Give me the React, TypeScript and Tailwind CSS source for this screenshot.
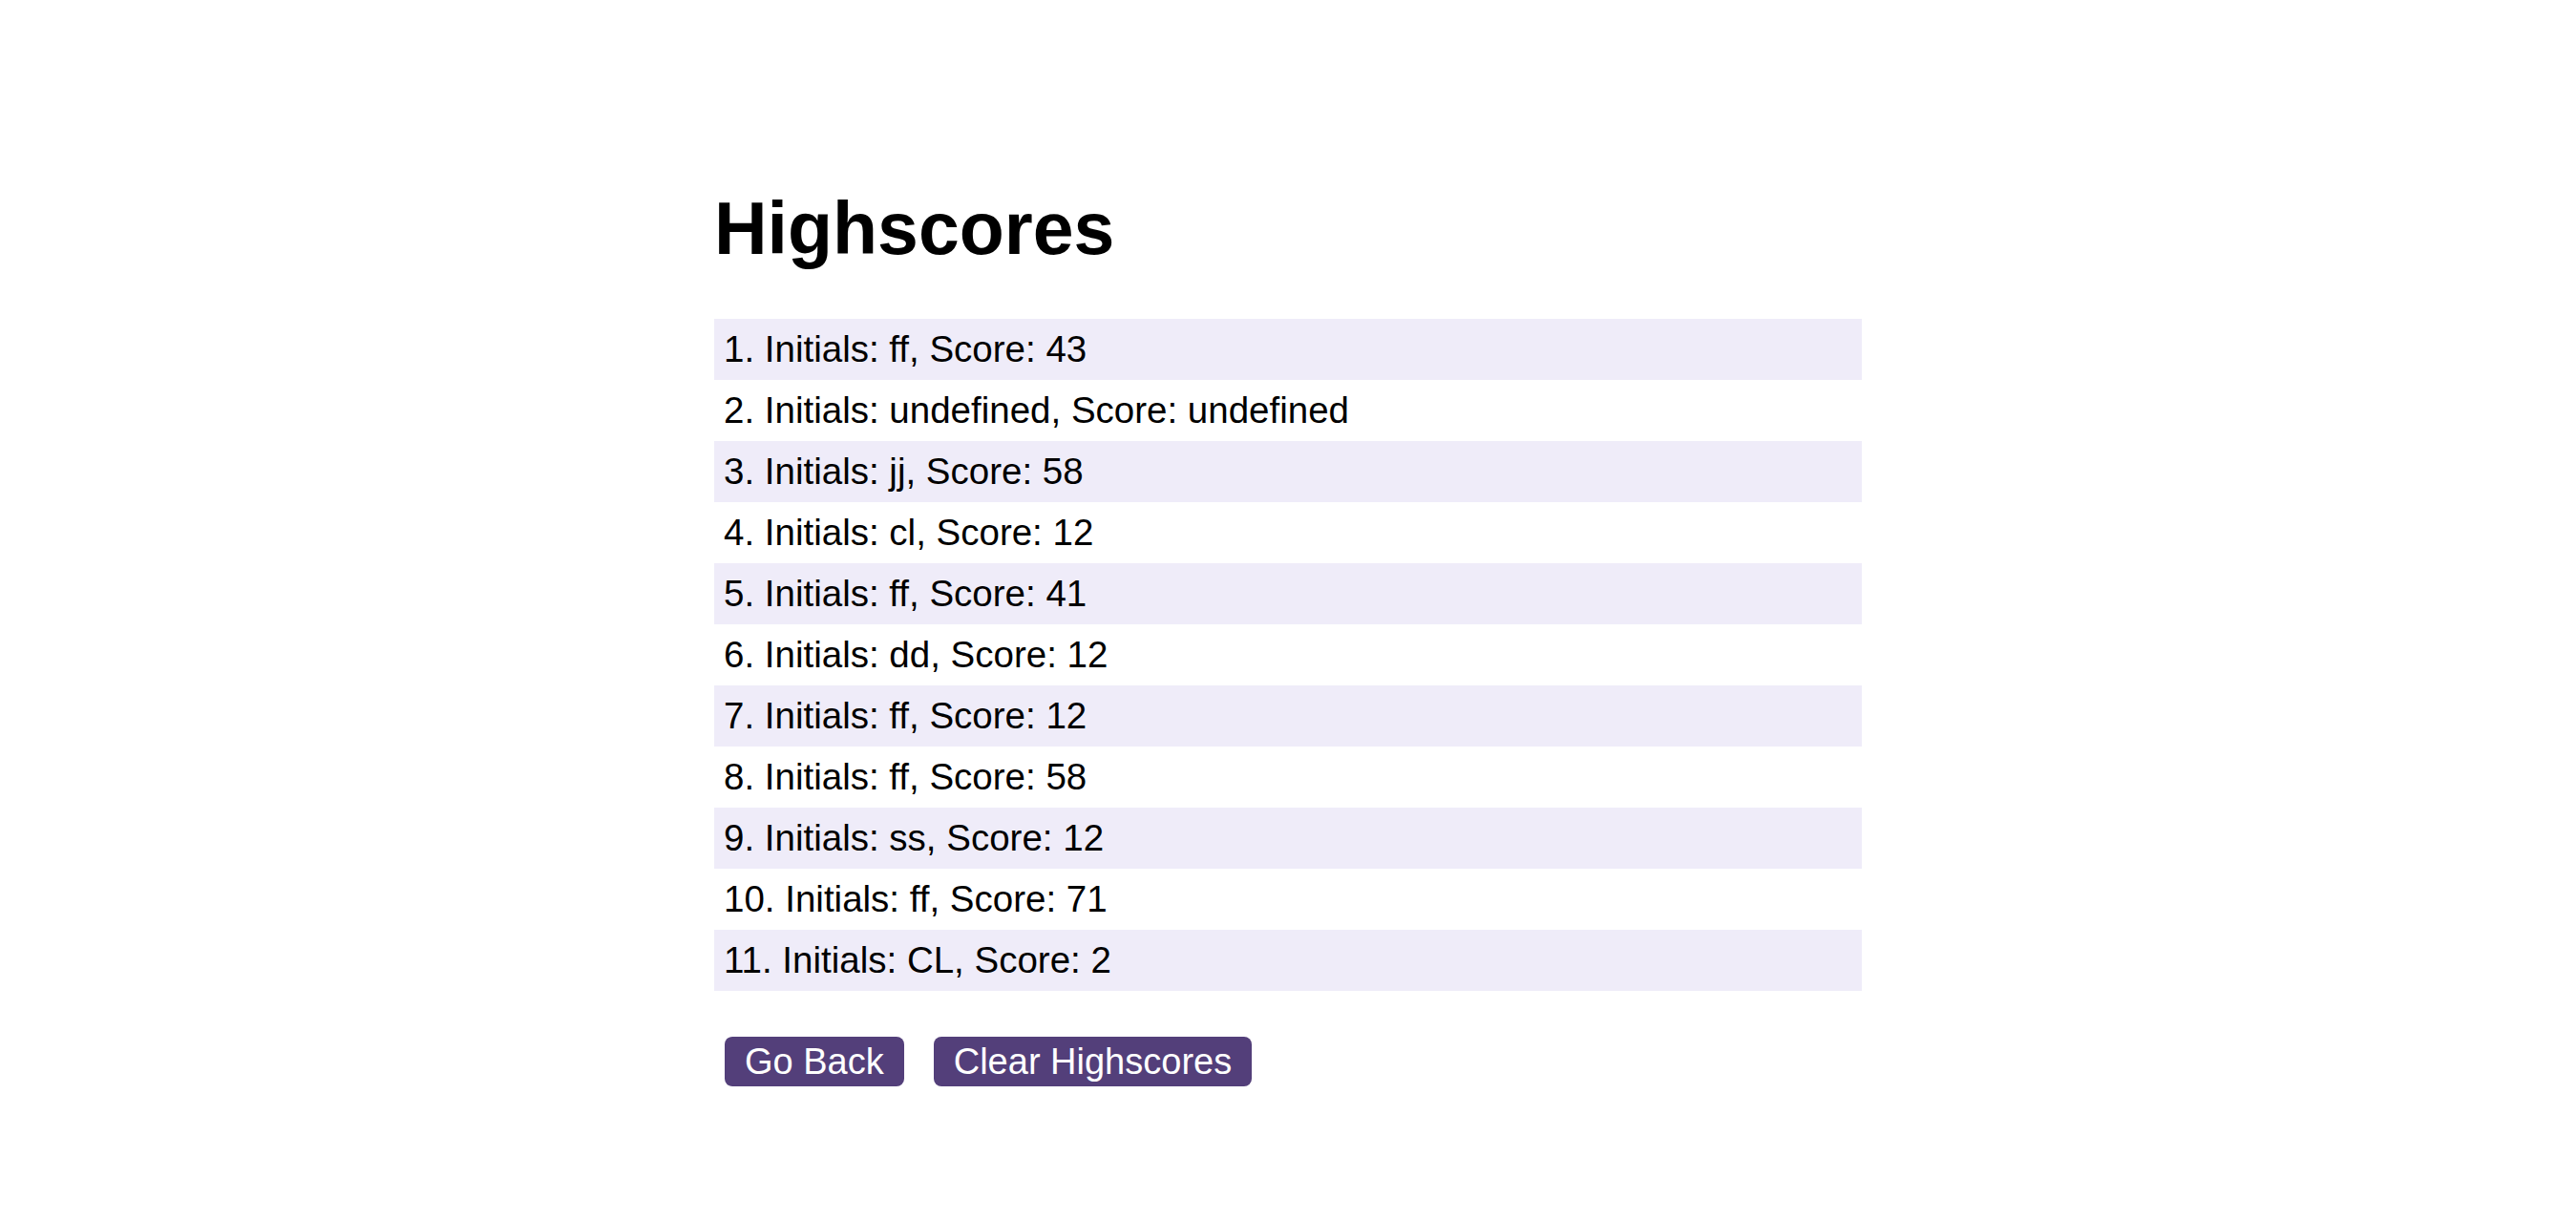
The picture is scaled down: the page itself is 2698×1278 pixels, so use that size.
import React from 'react';

const scores = [
  { initials: 'ff', score: '43' },
  { initials: 'undefined', score: 'undefined' },
  { initials: 'jj', score: '58' },
  { initials: 'cl', score: '12' },
  { initials: 'ff', score: '41' },
  { initials: 'dd', score: '12' },
  { initials: 'ff', score: '12' },
  { initials: 'ff', score: '58' },
  { initials: 'ss', score: '12' },
  { initials: 'ff', score: '71' },
  { initials: 'CL', score: '2' },
];

export default function App() {
  return (
    <div className="min-h-[1278px] bg-white text-black font-['Liberation_Sans',Arial,sans-serif]">
      <div className="w-[1202px] mx-auto pt-[197px]">
        {/* ── Title ── */}
        <h1 className="text-[77px] leading-[85px] font-bold mb-[52px]">Highscores</h1>

        {/* ── Score list ── */}
        <ol>
          {scores.map((s, i) => (
            <li
              key={i}
              className={`h-[64px] flex items-center pl-[10px] text-[38.5px] ${i % 2 === 0 ? 'bg-[#efecf9]' : 'bg-white'}`}
            >
              {i + 1}. Initials: {s.initials}, Score: {s.score}
            </li>
          ))}
        </ol>

        {/* ── Actions ── */}
        <div className="flex gap-[31px] mt-[48px] ml-[11px]">
          <button className="h-[52px] px-[21px] rounded-[8px] bg-[#533f7a] text-white text-[38px] leading-none flex items-center">
            Go Back
          </button>
          <button className="h-[52px] px-[21px] rounded-[8px] bg-[#533f7a] text-white text-[38px] leading-none flex items-center">
            Clear Highscores
          </button>
        </div>
      </div>
    </div>
  );
}
